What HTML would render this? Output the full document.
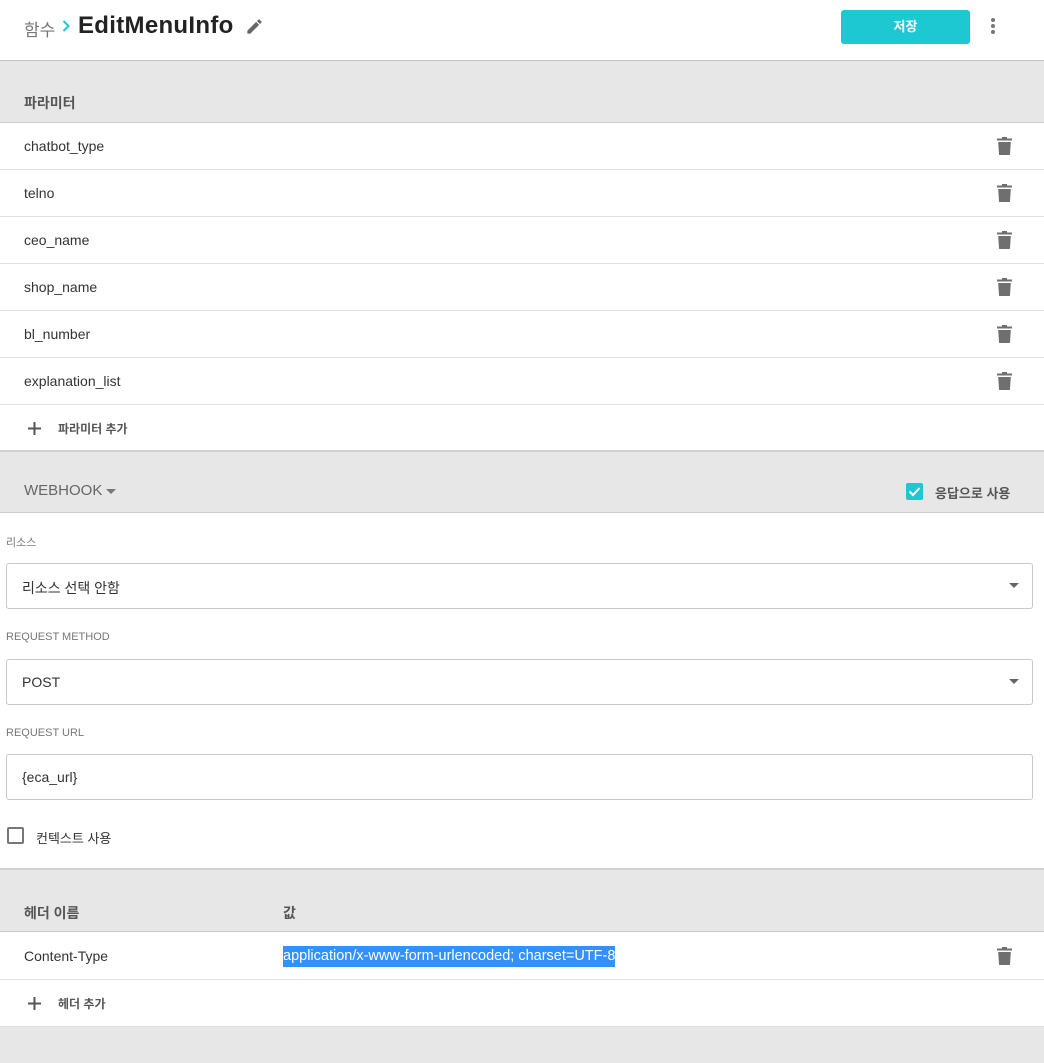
<!DOCTYPE html>
<html><head><meta charset="utf-8"><style>
*{margin:0;padding:0;box-sizing:border-box}
body{width:1044px;height:1063px;background:#e7e7e7;font-family:"Liberation Sans","Noto Sans CJK KR",sans-serif;color:#333;position:relative;overflow:hidden}
.a{position:absolute}
.w{background:#fff}
.row{position:absolute;left:0;width:1044px;height:47px;background:#fff;border-bottom:1px solid #e0e0e0}
.row span{position:absolute;left:24px;top:15px;font-size:14px;color:#333}
.trash{position:absolute;left:997px;top:14px}
.lbl{position:absolute;left:6px;font-size:11px;color:#777}
.box{position:absolute;left:6px;width:1027px;height:46px;border:1px solid #c8c8c8;border-radius:3px;background:#fff}
.box span{position:absolute;left:15px;top:14px;font-size:14px;color:#333}
.box i{position:absolute;right:13px;top:19px;width:0;height:0;border-left:5px solid transparent;border-right:5px solid transparent;border-top:5px solid #666}
.hd{font-weight:bold;font-size:14px;color:#555}
.plus{position:absolute;left:27px;top:16px}
</style></head><body>
<div class="a w" style="left:0;top:0;width:1044px;height:61px;border-bottom:1px solid #c4c4c4"></div>
<div class="a" style="left:24px;top:16px;font-size:17px;color:#777">함수</div>
<svg class="a" style="left:62px;top:20px" width="8" height="12" viewBox="0 0 8 12"><path d="M1.5 1l5 5-5 5" fill="none" stroke="#1ec8d3" stroke-width="2"/></svg>
<div class="a" style="left:78px;top:12px;font-size:24px;font-weight:bold;color:#222;letter-spacing:0.3px">EditMenuInfo</div>
<svg class="a" style="left:245px;top:17px" width="19" height="19" viewBox="0 0 24 24"><path d="M3 17.25V21h3.75L17.81 9.94l-3.75-3.75L3 17.25zM20.71 7.04a1 1 0 000-1.41l-2.34-2.34a1 1 0 00-1.41 0l-1.83 1.83 3.75 3.75 1.83-1.83z" fill="#666"/></svg>
<div class="a" style="left:841px;top:10px;width:129px;height:34px;background:#1ec8d3;border-radius:3px;color:#fff;font-size:13px;font-weight:bold;text-align:center;line-height:34px">저장</div>
<div class="a" style="left:991px;top:18px;width:4px;height:4px;border-radius:2px;background:#777;box-shadow:0 6px 0 #777,0 12px 0 #777"></div>

<div class="a hd" style="left:24px;top:93px">파라미터</div>
<div class="a" style="left:0;top:122px;width:1044px;height:1px;background:#ccc"></div>

<div class="row" style="top:123px"><span>chatbot_type</span><svg class="trash" width="15" height="18" viewBox="0 0 15 18"><path d="M5 0h5v1.5h5V3.5H0V1.5h5z M1.2 5h12.6l-.8 12.2c0 .5-.4.8-.9.8H2.9c-.5 0-.9-.3-.9-.8z" fill="#6f6f6f"/></svg></div>
<div class="row" style="top:170px"><span>telno</span><svg class="trash" width="15" height="18" viewBox="0 0 15 18"><path d="M5 0h5v1.5h5V3.5H0V1.5h5z M1.2 5h12.6l-.8 12.2c0 .5-.4.8-.9.8H2.9c-.5 0-.9-.3-.9-.8z" fill="#6f6f6f"/></svg></div>
<div class="row" style="top:217px"><span>ceo_name</span><svg class="trash" width="15" height="18" viewBox="0 0 15 18"><path d="M5 0h5v1.5h5V3.5H0V1.5h5z M1.2 5h12.6l-.8 12.2c0 .5-.4.8-.9.8H2.9c-.5 0-.9-.3-.9-.8z" fill="#6f6f6f"/></svg></div>
<div class="row" style="top:264px"><span>shop_name</span><svg class="trash" width="15" height="18" viewBox="0 0 15 18"><path d="M5 0h5v1.5h5V3.5H0V1.5h5z M1.2 5h12.6l-.8 12.2c0 .5-.4.8-.9.8H2.9c-.5 0-.9-.3-.9-.8z" fill="#6f6f6f"/></svg></div>
<div class="row" style="top:311px"><span>bl_number</span><svg class="trash" width="15" height="18" viewBox="0 0 15 18"><path d="M5 0h5v1.5h5V3.5H0V1.5h5z M1.2 5h12.6l-.8 12.2c0 .5-.4.8-.9.8H2.9c-.5 0-.9-.3-.9-.8z" fill="#6f6f6f"/></svg></div>
<div class="row" style="top:358px"><span>explanation_list</span><svg class="trash" width="15" height="18" viewBox="0 0 15 18"><path d="M5 0h5v1.5h5V3.5H0V1.5h5z M1.2 5h12.6l-.8 12.2c0 .5-.4.8-.9.8H2.9c-.5 0-.9-.3-.9-.8z" fill="#6f6f6f"/></svg></div>
<div class="row" style="top:405px;height:47px;border-bottom:2px solid #d0d0d0"><svg class="plus" width="15" height="15"><path d="M7.5 1v13M1 7.5h13" stroke="#555" stroke-width="2"/></svg><span style="left:58px;font-weight:bold;font-size:12px;color:#555">파라미터 추가</span></div>

<div class="a" style="left:24px;top:482px;font-size:15px;color:#666">WEBHOOK</div>
<div class="a" style="left:106px;top:489px;border-left:5px solid transparent;border-right:5px solid transparent;border-top:5px solid #777"></div>
<div class="a" style="left:906px;top:483px;width:17px;height:17px;background:#1ec8d3;border-radius:2px"></div>
<svg class="a" style="left:906px;top:483px" width="17" height="17"><path d="M3.5 8.5l3.5 3.5 6.5-7" fill="none" stroke="#fff" stroke-width="2"/></svg>
<div class="a" style="left:935px;top:483px;font-size:13px;font-weight:bold;color:#555">응답으로 사용</div>
<div class="a w" style="left:0;top:512px;width:1044px;height:358px;border-top:1px solid #ccc;border-bottom:2px solid #d0d0d0"></div>

<div class="lbl" style="top:534px">리소스</div>
<div class="box" style="top:563px"><span>리소스 선택 안함</span><i></i></div>
<div class="lbl" style="top:631px">REQUEST METHOD</div>
<div class="box" style="top:659px"><span>POST</span><i></i></div>
<div class="lbl" style="top:727px">REQUEST URL</div>
<div class="box" style="top:754px"><span>{eca_url}</span></div>
<div class="a" style="left:7px;top:827px;width:17px;height:17px;border:2px solid #777;border-radius:2px;background:#fff"></div>
<div class="a" style="left:36px;top:828px;font-size:13px;color:#333">컨텍스트 사용</div>

<div class="a hd" style="left:24px;top:903px">헤더 이름</div>
<div class="a hd" style="left:283px;top:903px">값</div>
<div class="a" style="left:0;top:931px;width:1044px;height:1px;background:#ccc"></div>
<div class="row" style="top:932px;height:48px"><span style="top:16px">Content-Type</span><span style="left:283px;top:14px;background:#3390ff;color:#fff;padding:2px 0;line-height:17px;font-size:14.5px">application/x-www-form-urlencoded; charset=UTF-8</span><svg class="trash" style="top:15px" width="15" height="18" viewBox="0 0 15 18"><path d="M5 0h5v1.5h5V3.5H0V1.5h5z M1.2 5h12.6l-.8 12.2c0 .5-.4.8-.9.8H2.9c-.5 0-.9-.3-.9-.8z" fill="#6f6f6f"/></svg></div>
<div class="row" style="top:980px;height:47px"><svg class="plus" width="15" height="15"><path d="M7.5 1v13M1 7.5h13" stroke="#555" stroke-width="2"/></svg><span style="left:58px;font-weight:bold;font-size:12px;color:#555">헤더 추가</span></div>
</body></html>
